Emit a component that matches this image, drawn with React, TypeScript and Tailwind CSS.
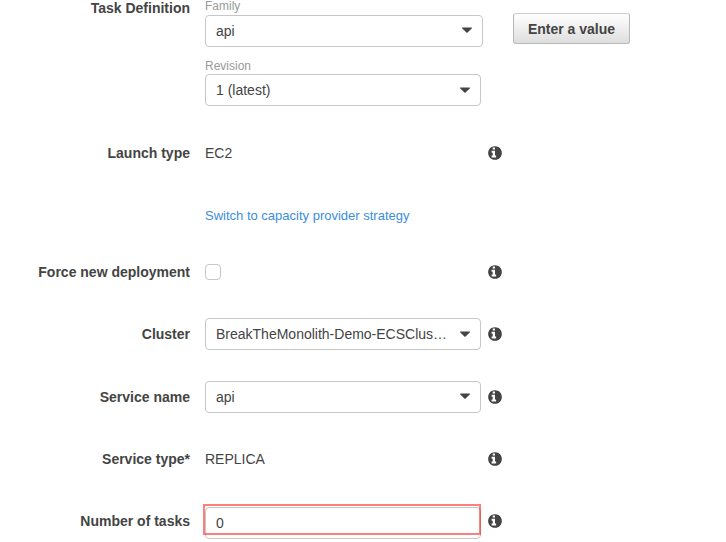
import type { ReactNode } from "react";

function InfoIcon() {
  return (
    <svg viewBox="0 0 1792 1792" className="ml-[6px] size-4 shrink-0 fill-[#444]" aria-label="Info">
      <path d="M1024 1376v-160q0-14-9-23t-23-9h-96v-512q0-14-9-23t-23-9h-320q-14 0-23 9t-9 23v160q0 14 9 23t23 9h96v320h-96q-14 0-23 9t-9 23v160q0 14 9 23t23 9h448q14 0 23-9t9-23zM896 480v-160q0-14-9-23t-23-9h-192q-14 0-23 9t-9 23v160q0 14 9 23t23 9h192q14 0 23-9t9-23zM1664 896q0 209-103 385.5t-279.5 279.5-385.5 103-385.5-103-279.5-279.5-103-385.5 103-385.5 279.5-279.5 385.5-103 385.5 103 279.5 279.5 103 385.5z" />
    </svg>
  );
}

function Select({ value, className = "", arrow = "mb-[2px]" }: { value: string; className?: string; arrow?: string }) {
  return (
    <div
      className={`flex h-8 shrink-0 items-center justify-between rounded-[4px] border border-[#c7c7c7] bg-white pl-[10px] pr-[10px] leading-5 ${className}`}
    >
      <span className="whitespace-nowrap">{value}</span>
      <svg viewBox="0 0 10 6" className={`h-[6px] w-[10px] shrink-0 fill-[#444] ${arrow}`}>
        <path d="M.4.4h9.2q.6.5.1 1L5.6 5.4q-.6.5-1.2 0L.3 1.4Q-.2.9.4.4z" />
      </svg>
    </div>
  );
}

function Row({ label, children, info = true }: { label?: string; children: ReactNode; info?: boolean }) {
  return (
    <div className="flex h-8 items-center">
      <div className="mr-[15px] w-[190px] shrink-0 text-right font-bold leading-5">{label}</div>
      <div className="w-[276px] shrink-0 leading-5">{children}</div>
      {info && <InfoIcon />}
    </div>
  );
}

export default function App() {
  return (
    <main className="h-[542px] w-[726px] overflow-hidden bg-white font-['Liberation_Sans',Arial,sans-serif] text-[14px] text-[#444]">
      <section className="flex h-[106px] items-start">
        <div className="mr-[15px] mt-[-2px] w-[190px] shrink-0 text-right font-bold leading-5">Task Definition</div>
        <div className="w-[278px] shrink-0">
          <div className="mt-[-2px] h-[17px] text-[12px] leading-4 text-[#999]">Family</div>
          <Select value="api" className="w-[278px]" />
          <div className="mt-[11px] h-4 text-[12px] leading-4 text-[#999]">Revision</div>
          <Select value="1 (latest)" className="w-[276px]" arrow="mb-0" />
        </div>
        <button className="ml-[30px] mt-[13px] h-[31px] w-[117px] rounded-[3px] border border-[#b8b8b8] border-t-[#ccc] bg-linear-to-b from-white to-[#dedede] font-bold leading-5">
          Enter a value
        </button>
      </section>

      <div className="mt-[31px]">
        <Row label="Launch type">EC2</Row>
      </div>
      <div className="mt-[30px]">
        <Row info={false}>
          <a className="text-[13px] text-[#3b8ddd]">Switch to capacity provider strategy</a>
        </Row>
      </div>
      <div className="mt-[25px]">
        <Row label="Force new deployment">
          <div role="checkbox" aria-checked="false" className="size-4 rounded-[4px] border border-[#c7c7c7]" />
        </Row>
      </div>
      <div className="mt-[30px]">
        <Row label="Cluster">
          <Select value="BreakTheMonolith-Demo-ECSClus…" arrow="mb-0" />
        </Row>
      </div>
      <div className="mt-[31px]">
        <Row label="Service name">
          <Select value="api" />
        </Row>
      </div>
      <div className="mt-[30px]">
        <Row label="Service type*">REPLICA</Row>
      </div>
      <div className="mt-[30px]">
        <Row label="Number of tasks">
          <div className="relative mt-[4px] flex h-8 items-center rounded-[4px] border border-[#c7c7c7] pl-[10px]">
            0
            <div className="absolute -left-[3px] -top-[4px] h-[31px] w-[278px] border-2 border-[#ff0000]/50" />
          </div>
        </Row>
      </div>
    </main>
  );
}
